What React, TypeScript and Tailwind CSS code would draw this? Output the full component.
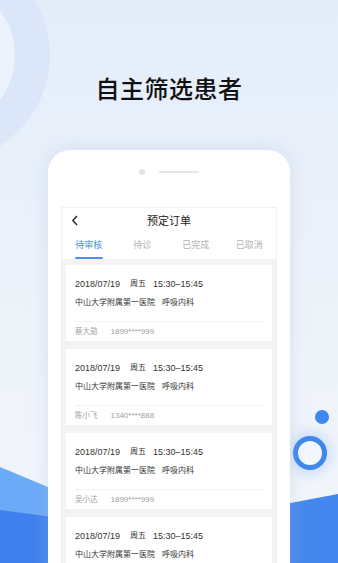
import React from "react";

const orders = [
  { name: "蔡大勋", phone: "1899****999" },
  { name: "陈小飞", phone: "1340****888" },
  { name: "吴小达", phone: "1899****999" },
  { name: "吴小达", phone: "1899****999" },
];

const font = { fontFamily: '"Liberation Sans", "Noto Sans CJK SC", sans-serif' };

function Card({ name, phone }: { name: string; phone: string }) {
  return (
    <div className="bg-white pl-[9px] pr-[8px] pt-[13px] pb-[3px] shrink-0">
      <div className="flex items-center h-[12px] leading-[12px] text-[9px] text-[#333]">
        <span>2018/07/19</span>
        <span className="ml-[10px] text-[8px]">周五</span>
        <span className="ml-[7px]">15:30–15:45</span>
      </div>
      <div className="mt-[7px] h-[12px] leading-[12px] text-[8px] text-[#333]">
        中山大学附属第一医院<span className="ml-[7px]">呼吸内科</span>
      </div>
      <div className="mt-[12px] h-px bg-[#f1f1f1]" />
      <div className="mt-[4px] flex items-center h-[12px] leading-[12px] text-[#a0a0a0]">
        <span className="text-[7.5px]">{name}</span>
        <span className="ml-[13px] text-[8px]">{phone}</span>
      </div>
    </div>
  );
}

export default function App() {
  return (
    <div
      className="relative w-[338px] h-[563px] overflow-hidden bg-gradient-to-b from-[#e3edfa] via-[#edf2fa] to-[#f3f6fb]"
      style={font}
    >
      <svg className="absolute inset-0" width="338" height="563" viewBox="0 0 338 563">
        <defs>
          <filter id="blur" x="-50%" y="-50%" width="200%" height="200%">
            <feGaussianBlur stdDeviation="6" />
          </filter>
        </defs>
        <circle cx="-58" cy="55" r="73" fill="#edf3fc" />
        <circle cx="-58" cy="55" r="90.5" fill="none" stroke="#dbe7f9" strokeWidth="35" />
        <polygon points="0,467 60,492 60,563 0,563" fill="#6aaaf6" />
        <polygon points="0,510 60,518 60,563 0,563" fill="#3f80ee" />
        <polygon points="280,505 338,494 338,563 280,563" fill="#4487ee" />
        <circle cx="310" cy="453" r="22" fill="#cfe0f8" filter="url(#blur)" />
        <circle cx="310" cy="453" r="14.5" fill="#f3f7fd" stroke="#3f86ee" strokeWidth="5" />
        <circle cx="322" cy="417" r="7" fill="#3d87ef" />
      </svg>

      <div className="relative flex flex-col items-center">
        <h1
          className="mt-[76px] text-[24px] leading-[24px] font-medium text-[#111] tracking-[0.5px]"
          style={{ fontFamily: '"Noto Sans CJK SC", sans-serif' }}
        >
          自主筛选患者
        </h1>

        <div className="mt-[50px] w-[242px] h-[430px] rounded-t-[22px] bg-white shadow-[0_0_18px_rgba(160,190,230,0.35)] flex flex-col">
          <div className="h-[57px] pt-[19px] shrink-0">
            <div className="flex items-center justify-center gap-[14px] h-[6px]">
              <div className="w-[6px] h-[6px] rounded-full bg-[#e3e3e3]" />
              <div className="w-[40px] h-[2px] rounded-full bg-[#e6e6e6]" />
            </div>
          </div>

          <div className="mx-[13px] flex-1 border-t border-x border-[#f1f1f1] flex flex-col min-h-0">
            <div className="h-[24px] grid grid-cols-[1fr_auto_1fr] items-center shrink-0">
              <div className="pl-[9px] flex items-center">
                <svg width="8" height="11" viewBox="0 0 8 11">
                  <polyline points="6,1 1.8,5.5 6,10" fill="none" stroke="#222" strokeWidth="1.4" />
                </svg>
              </div>
              <div
                className="text-[11px] leading-[12px] text-[#222]"
                style={{ fontFamily: '"Noto Sans CJK SC", sans-serif' }}
              >
                预定订单
              </div>
              <div />
            </div>

            <div className="grid grid-cols-4 h-[27px] shrink-0 pt-[7px]">
              <div className="flex flex-col items-center">
                <span className="text-[9px] leading-[12px] text-[#4a8ff2]">待审核</span>
                <div className="mt-[6px] w-[28px] h-[2px] rounded-full bg-[#4a8ff2]" />
              </div>
              <div className="flex flex-col items-center">
                <span className="text-[9px] leading-[12px] text-[#b3b3b3]">待诊</span>
              </div>
              <div className="flex flex-col items-center">
                <span className="text-[9px] leading-[12px] text-[#b3b3b3]">已完成</span>
              </div>
              <div className="flex flex-col items-center">
                <span className="text-[9px] leading-[12px] text-[#b3b3b3]">已取消</span>
              </div>
            </div>

            <div className="flex-1 bg-[#f3f3f3] px-[4px] pt-[6px] flex flex-col gap-[8px] overflow-hidden">
              {orders.map((o, i) => (
                <Card key={i} name={o.name} phone={o.phone} />
              ))}
            </div>
          </div>
        </div>
      </div>
    </div>
  );
}
